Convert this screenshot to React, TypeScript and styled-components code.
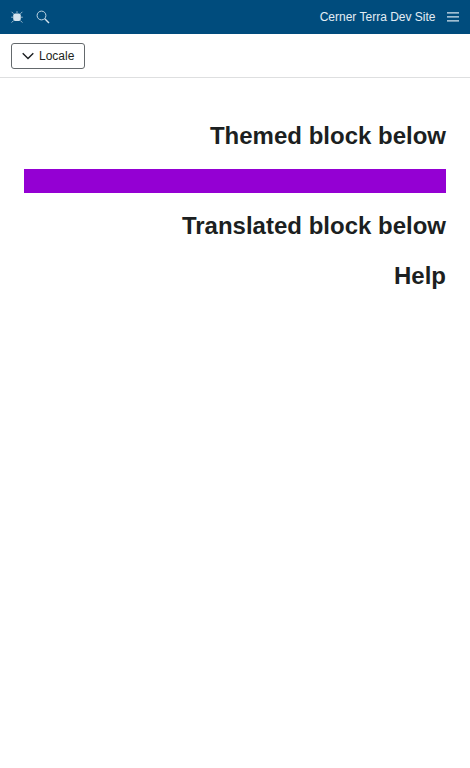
import React from "react";
import styled, { createGlobalStyle } from "styled-components";

const GlobalStyle = createGlobalStyle`
  html, body {
    margin: 0;
    padding: 0;
    background: #fff;
    font-family: "Liberation Sans", Arial, sans-serif;
  }
`;

const Header = styled.header`
  height: 34px;
  background: #004c7d;
  color: #e3edf4;
  display: flex;
  align-items: center;
  justify-content: space-between;
  padding: 0 11px 0 10px;
`;

const HeaderGroup = styled.div<{ $gap: number }>`
  display: flex;
  align-items: center;
  gap: ${(props) => props.$gap}px;
`;

const IconSlot = styled.span`
  display: flex;
  color: #d5e4ee;
`;

const SiteTitle = styled.span`
  font-size: 12px;
  line-height: 14px;
  color: #e3edf4;
`;

const Toolbar = styled.div`
  height: 44px;
  padding: 9px 11px 0;
  box-sizing: border-box;
  border-bottom: 1px solid #dedfe0;
`;

const LocaleButton = styled.button`
  display: flex;
  align-items: center;
  gap: 5px;
  width: 74px;
  height: 26px;
  padding: 0 0 0 10px;
  box-sizing: border-box;
  background: #fff;
  border: 1px solid #64696c;
  border-radius: 3px;
  color: #1c1f21;
  font-family: inherit;
  font-size: 12px;
`;

const Content = styled.main`
  padding: 44px 24px 0;
`;

const Heading = styled.h2`
  margin: 0;
  font-size: 24px;
  line-height: 28px;
  font-weight: 700;
  text-align: right;
  color: #1c1f21;
`;

const ThemedBlock = styled.div`
  height: 24px;
  margin: 19px 0 19px;
  background: #9400d3;
`;

const HelpHeading = styled(Heading)`
  margin-top: 22px;
`;

function BugIcon() {
  return (
    <svg width="14" height="14" viewBox="0 0 14 14" fill="none">
      <rect x="3.2" y="3.4" width="7.6" height="7.6" rx="2" fill="currentColor" />
      <path
        d="M7 1.2v2M1.2 7.2h2M10.8 7.2h2M1.6 1.8l2 2M12.4 1.8l-2 2M1.6 12.6l2-2M12.4 12.6l-2-2"
        stroke="currentColor"
        strokeWidth="1"
        opacity="0.7"
      />
    </svg>
  );
}

function SearchIcon() {
  return (
    <svg width="14" height="14" viewBox="0 0 14 14" fill="none">
      <circle cx="5.5" cy="5.5" r="4.4" stroke="currentColor" strokeWidth="0.9" />
      <path d="M8.8 8.8l4.2 4.2" stroke="currentColor" strokeWidth="1.4" />
    </svg>
  );
}

function MenuIcon() {
  return (
    <svg width="12" height="12" viewBox="0 0 12 12" fill="none">
      <path d="M0 1.8h12M0 5.8h12M0 9.8h12" stroke="currentColor" strokeWidth="1.2" />
    </svg>
  );
}

function ChevronIcon() {
  return (
    <svg width="12" height="8" viewBox="0 0 12 8" fill="none">
      <path d="M0.7 1.2L6 6.5l5.3-5.3" stroke="#1c1f21" strokeWidth="1.4" />
    </svg>
  );
}

export default function App() {
  return (
    <>
      <GlobalStyle />
      <Header>
        <HeaderGroup $gap={12}>
          <IconSlot>
            <BugIcon />
          </IconSlot>
          <IconSlot>
            <SearchIcon />
          </IconSlot>
        </HeaderGroup>
        <HeaderGroup $gap={11.5}>
          <SiteTitle>Cerner Terra Dev Site</SiteTitle>
          <IconSlot>
            <MenuIcon />
          </IconSlot>
        </HeaderGroup>
      </Header>
      <Toolbar>
        <LocaleButton>
          <ChevronIcon />
          Locale
        </LocaleButton>
      </Toolbar>
      <Content>
        <Heading>Themed block below</Heading>
        <ThemedBlock />
        <Heading>Translated block below</Heading>
        <HelpHeading>Help</HelpHeading>
      </Content>
    </>
  );
}
